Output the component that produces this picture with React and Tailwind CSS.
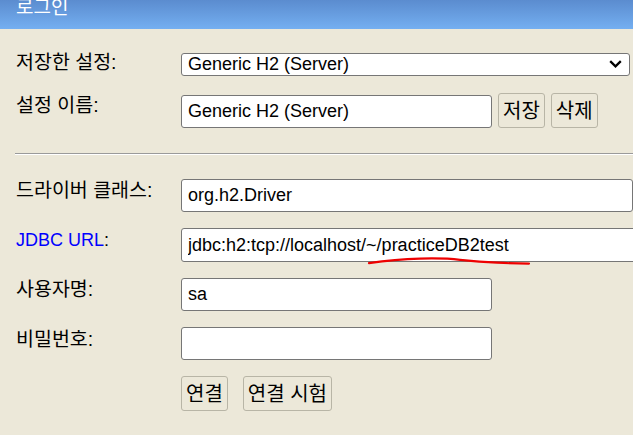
import { useState } from 'react'

const font = { fontFamily: '"Liberation Sans", "Noto Sans CJK KR", sans-serif' }

function Field({ value, width, height = 'h-[33px]', onChange }) {
  return (
    <input
      value={value}
      onChange={onChange}
      className={`${width} ${height} rounded-[3px] border border-[#767676] bg-white px-[6px] text-[18px] text-black outline-none`}
    />
  )
}

function Btn({ children }) {
  return (
    <button className="h-[35px] rounded-[3px] border border-[#b8b5a6] bg-[#ece8d9] px-[4px] text-[20px] leading-[24px] text-black">
      {children}
    </button>
  )
}

function Label({ children, className = '' }) {
  return <label className={`w-[165px] shrink-0 text-[19.5px] leading-[24px] ${className}`}>{children}</label>
}

export default function App() {
  const [saved, setSaved] = useState('Generic H2 (Server)')
  const [name, setName] = useState('Generic H2 (Server)')
  const [driver, setDriver] = useState('org.h2.Driver')
  const [url, setUrl] = useState('jdbc:h2:tcp://localhost/~/practiceDB2test')
  const [user, setUser] = useState('sa')
  const [pw, setPw] = useState('')

  return (
    <div style={font} className="h-[435px] w-[633px] overflow-hidden bg-[#ece8d9] text-[18px] leading-[24px] text-black">
      <div className="h-[29px] overflow-hidden bg-gradient-to-b from-[#5b8ccf] to-[#74aff1] px-4">
        <div className="-mt-[4px] text-[19px] leading-[24px] text-white">로그인</div>
      </div>

      <div className="pl-4">
        <div className="mt-[23px] flex items-start">
          <Label className="-mt-[2px]">저장한 설정:</Label>
          <div className="relative">
            <select
              value={saved}
              onChange={(e) => setSaved(e.target.value)}
              className="h-[23px] w-[449px] appearance-none rounded-[3px] border border-[#767676] bg-white px-[6px] text-[18px] leading-[20px] text-black outline-none"
            >
              <option>Generic H2 (Server)</option>
              <option>Generic H2 (Embedded)</option>
            </select>
            <svg className="pointer-events-none absolute right-[8px] top-[8px]" width="13" height="8" viewBox="0 0 13 8">
              <path d="M1.2 1.2 L6.5 6.3 L11.8 1.2" fill="none" stroke="#000" strokeWidth="2.3" />
            </svg>
          </div>
        </div>

        <div className="mt-[17px] flex items-start">
          <Label>설정 이름:</Label>
          <div className="flex items-center gap-[6px]">
            <div className="mt-[1px]">
              <Field value={name} width="w-[311px]" onChange={(e) => setName(e.target.value)} />
            </div>
            <Btn>저장</Btn>
            <Btn>삭제</Btn>
          </div>
        </div>
      </div>

      <div className="ml-[15px] mt-[25px] h-[2px] border-t border-b border-t-[#9a9a9a] border-b-white" />

      <div className="pl-4">
        <div className="mt-[24px] flex items-start">
          <Label className="-mt-[1px]">드라이버 클래스:</Label>
          <Field value={driver} width="w-[470px]" onChange={(e) => setDriver(e.target.value)} />
        </div>

        <div className="mt-[16px] flex items-start">
          <label className="w-[165px] shrink-0">
            <span className="text-[#0000ff]">JDBC URL</span>:
          </label>
          <div className="relative">
            <Field value={url} width="w-[470px]" height="h-[34px]" onChange={(e) => setUrl(e.target.value)} />
            <svg className="pointer-events-none absolute left-[179px] top-[25px]" width="175" height="16" viewBox="0 0 175 16">
              <path
                d="M9 10.2 Q 35 6.2 60 5.6 T 100 6.8 Q 120 8.8 137 9.7 T 169 10.6"
                fill="none"
                stroke="#ee0000"
                strokeWidth="2.2"
                strokeLinecap="round"
              />
            </svg>
          </div>
        </div>

        <div className="mt-[16px] flex items-start">
          <Label className="-mt-[1px]">사용자명:</Label>
          <Field value={user} width="w-[311px]" onChange={(e) => setUser(e.target.value)} />
        </div>

        <div className="mt-[16px] flex items-start">
          <Label>비밀번호:</Label>
          <Field value={pw} width="w-[311px]" onChange={(e) => setPw(e.target.value)} />
        </div>

        <div className="ml-[165px] mt-[16px] flex gap-[15px]">
          <Btn>연결</Btn>
          <Btn>연결 시험</Btn>
        </div>
      </div>
    </div>
  )
}
